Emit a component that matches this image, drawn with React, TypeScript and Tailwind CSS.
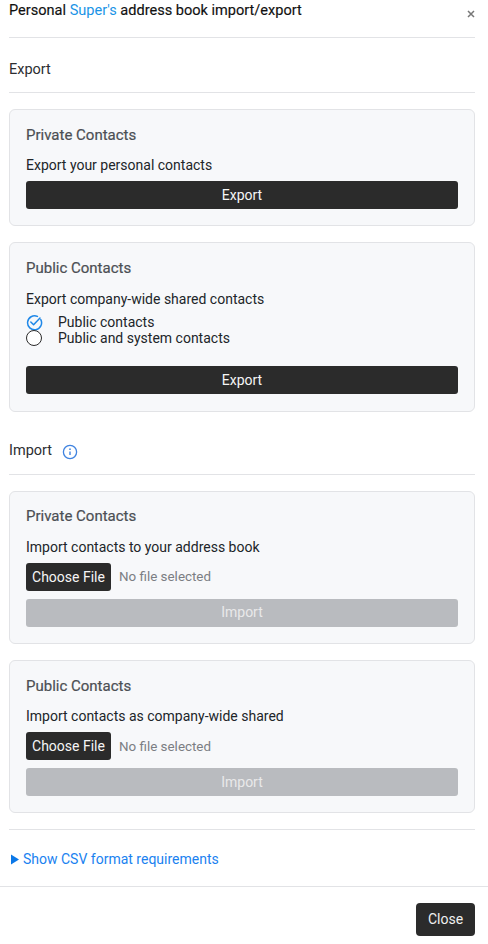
import React from "react";

function Divider({ className = "" }: { className?: string }) {
  return <div className={`h-px bg-[#e2e3e6] ${className}`} />;
}

function DarkButton({ label }: { label: string }) {
  return (
    <button className="block w-full h-[28px] rounded-[3px] bg-[#2b2b2b] text-[#f5f5f5] text-[14px] leading-[28px] text-center">
      {label}
    </button>
  );
}

function DisabledButton({ label, low = false }: { label: string; low?: boolean }) {
  return (
    <button className={`block w-full h-[28px] rounded-[3px] bg-[#b9bbbf] text-[#e9e9ea] text-[14px] text-center ${low ? "leading-[28px]" : "leading-[26px] pb-[2px]"}`}>
      {label}
    </button>
  );
}

function Card({ title, children, className = "", tight = false }: { title: string; children: React.ReactNode; className?: string; tight?: boolean }) {
  return (
    <section className={`rounded-[6px] border border-[#e2e3e6] bg-[#f7f8fa] px-[16px] pb-[16px] ${tight ? "pt-[15px]" : "pt-[16px]"} ${className}`}>
      <h6 className={`text-[15px] leading-[18px] font-normal [-webkit-text-stroke:0.2px_#4c4f54] text-[#4c4f54] ${tight ? "mb-[12px]" : "mb-[11px]"}`}>{title}</h6>
      {children}
    </section>
  );
}

function FileRow({ low = false }: { low?: boolean }) {
  return (
    <div className="flex items-center h-[28px] mt-[5px] mb-[8px]">
      <button className="h-[28px] w-[85px] rounded-[3px] bg-[#2b2b2b] text-[#f5f5f5] text-[14px] leading-[28px] text-center">
        Choose File
      </button>
      <span className={`ml-[8px] text-[13.4px] text-[#7b7e83] ${low ? "pt-[2px]" : ""}`}>No file selected</span>
    </div>
  );
}

export default function App() {
  return (
    <div className="w-[488px] h-[944px] bg-white overflow-hidden text-[14px] text-[#212529] font-['Roboto',sans-serif]">
      <div className="pl-[9px] pr-[13px]">
        <div className="relative h-[37px]">
          <h5 className="text-[14.56px] leading-[20px] font-normal text-[#111] [-webkit-text-stroke:0.15px_#111]">
            Personal <span className="text-[#1a94e6] [-webkit-text-stroke:0]">Super's</span> address book import/export
          </h5>
          <svg className="absolute left-[458px] top-[10px]" width="8" height="8" viewBox="0 0 8 8">
            <path d="M1 1L7 7M7 1L1 7" stroke="#777" strokeWidth="1.5" />
          </svg>
        </div>
        <Divider />
        <div className="h-[54px] pt-[10px] flex items-center text-[14.5px] text-[#2c2e31]">Export</div>
        <Divider />
        <Card title="Private Contacts" className="mt-[16px] h-[117px]">
          <p className="leading-[21px] mb-[5px]">Export your personal contacts</p>
          <DarkButton label="Export" />
        </Card>
        <Card title="Public Contacts" className="mt-[16px] h-[170px]">
          <p className="leading-[21px] mb-[4px] pt-[1px]">Export company-wide shared contacts</p>
          <div className="flex items-center h-[16px]">
            <svg width="17" height="17" viewBox="0 0 17 17" fill="none" className="shrink-0 -mr-px">
              <path d="M14.8 5.6A7 7 0 1 1 11.4 2.4" stroke="#1f88e8" strokeWidth="1.5" strokeLinecap="round" />
              <path d="M4.8 8L7.6 10.8L14 4" stroke="#1f88e8" strokeWidth="1.5" strokeLinecap="round" strokeLinejoin="round" />
            </svg>
            <span className="ml-[16px] leading-[16px]">Public contacts</span>
          </div>
          <div className="flex items-center h-[16px]">
            <span className="block shrink-0 w-[16px] h-[16px] rounded-full border-[1.3px] border-[#2a2a2a] bg-white" />
            <span className="ml-[16px] leading-[16px]">Public and system contacts</span>
          </div>
          <div className="mt-[20px]">
            <DarkButton label="Export" />
          </div>
        </Card>
        <div className="mt-[21px] h-[41px] pb-[5px] flex items-center text-[14.5px] text-[#2c2e31]">
          Import
          <svg className="ml-[10px] mt-[1px]" width="16" height="16" viewBox="0 0 16 16" fill="none">
            <circle cx="8" cy="8" r="6.6" stroke="#3f83e0" strokeWidth="1.3" />
            <circle cx="8" cy="5.2" r="0.85" fill="#3f83e0" />
            <path d="M8 7.4V11" stroke="#3f83e0" strokeWidth="1.4" />
          </svg>
        </div>
        <Divider />
        <Card title="Private Contacts" tight className="mt-[16px] h-[153px]">
          <p className="leading-[21px]">Import contacts to your address book</p>
          <FileRow />
          <DisabledButton label="Import" />
        </Card>
        <Card title="Public Contacts" className="mt-[16px] h-[153px]">
          <p className="leading-[21px]">Import contacts as company-wide shared</p>
          <FileRow low />
          <DisabledButton label="Import" low />
        </Card>
        <Divider className="mt-[16px]" />
        <div className="h-[56px] pt-[2px] flex items-center text-[14px] text-[#1a82f0]">
          <svg className="ml-[2px] mr-[4px]" width="8" height="11" viewBox="0 0 8 11">
            <path d="M0 0.5L8 5.5L0 10.5Z" fill="#0b78e8" />
          </svg>
          Show CSV format requirements
        </div>
      </div>
      <Divider />
      <div className="flex justify-end pt-[16px] px-[13px]">
        <button className="h-[33px] w-[59px] rounded-[4px] bg-[#2b2b2b] text-[#f0f0f0] text-[14px]">Close</button>
      </div>
    </div>
  );
}
